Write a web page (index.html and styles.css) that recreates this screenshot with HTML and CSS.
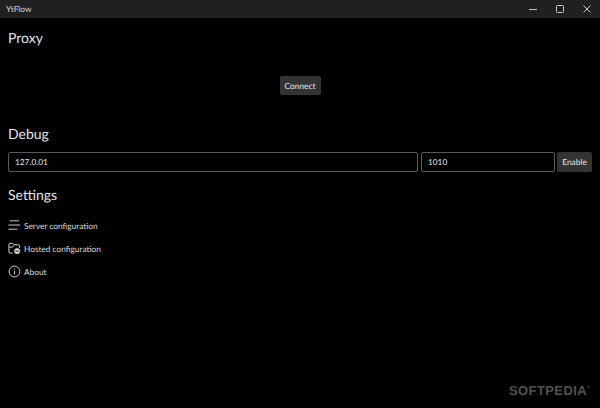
FILE: index.html
```html
<!DOCTYPE html>
<html lang="en">
<head>
<meta charset="utf-8">
<title>YtFlow</title>
<link rel="stylesheet" href="styles.css">
</head>
<body>
<div class="app">
  <header class="titlebar">
    <span class="app-name">YtFlow</span>
    <div class="caption">
      <svg class="cap-icon" viewBox="0 0 10 10"><path d="M1 5.5H9" /></svg>
      <svg class="cap-icon" viewBox="0 0 10 10"><rect x="1.5" y="1.5" width="7" height="7" rx="1" /></svg>
      <svg class="cap-icon" viewBox="0 0 10 10"><path d="M1.5 1.5L8.5 8.5M8.5 1.5L1.5 8.5" /></svg>
    </div>
  </header>
  <main class="content">
    <h2 class="heading">Proxy</h2>
    <div class="connect-row"><button class="btn">Connect</button></div>
    <h2 class="heading debug-heading">Debug</h2>
    <div class="debug-row">
      <div class="field field-host">127.0.01</div>
      <div class="field field-port">1010</div>
      <button class="btn btn-enable">Enable</button>
    </div>
    <h2 class="heading settings-heading">Settings</h2>
    <nav class="menu">
      <div class="menu-item">
        <svg class="menu-icon" viewBox="0 0 14 14"><path d="M2 2H12M0.5 6.5H13M0.5 11H10" /></svg>
        <span>Server configuration</span>
      </div>
      <div class="menu-item">
        <svg class="menu-icon" viewBox="0 0 14 14"><path d="M5 12H2a1 1 0 0 1-1-1V2.500a1 1 0 0 1 1-1h3l1.500 1.500H11.500a1 1 0 0 1 1 1v2.500" /><path d="M1 5.500H5l1.500-2" /><circle class="solid" cx="9.800" cy="9.800" r="3.700" /><path class="cut" d="M8 9.800h3.600" /></svg>
        <span>Hosted configuration</span>
      </div>
      <div class="menu-item">
        <svg class="menu-icon" viewBox="0 0 14 14"><circle cx="7" cy="7" r="5.800" /><path d="M7 6.300V10.200M7 3.800V5" /></svg>
        <span>About</span>
      </div>
    </nav>
  </main>
  <div class="watermark">SOFTPEDIA<sup class="reg">®</sup></div>
</div>
</body>
</html>
```
FILE: styles.css
```css
* { box-sizing: border-box; }
html, body { margin: 0; padding: 0; background: #000; }
body { width: 600px; height: 408px; overflow: hidden; font-family: "Lato", "Liberation Sans", sans-serif; color: #fff; text-rendering: geometricPrecision; }
.app { position: relative; width: 600px; height: 408px; background: #000; }
.titlebar { height: 18px; background: #202020; display: flex; align-items: center; justify-content: space-between; padding-left: 6px; }
.app-name { font-size: 8.3px; color: #d8d8d8; }
.caption { display: flex; height: 100%; align-items: center; gap: 17px; padding-right: 8px; }
.cap-icon { width: 10px; height: 10px; fill: none; stroke: #c8c8c8; stroke-width: 1; }
.content { padding: 0 8px; }
.heading { margin: 0; font-weight: 400; font-size: 14px; line-height: 20px; color: #e6e6e6; }
.content > .heading:first-child { margin-top: 10px; }
.connect-row { display: flex; justify-content: center; margin-top: 28px; }
.btn { height: 19px; padding: 0 4px; border: 0; border-radius: 2px; background: #333; color: #e4e4e4; font: 8.4px "Lato", "Liberation Sans", sans-serif; text-rendering: geometricPrecision; }
.connect-row .btn { width: 41px; }
.debug-heading { margin-top: 29px; }
.debug-row { display: flex; margin-top: 8px; }
.field { height: 20px; border: 1px solid #5a5a5a; border-radius: 2px; background: #000; padding-left: 6px; font-size: 8.3px; line-height: 18px; color: #e4e4e4; }
.field-host { width: 410px; margin-right: 3px; }
.field-port { width: 134px; margin-right: 2px; }
.btn-enable { width: 35px; height: 20px; }
.settings-heading { margin-top: 13px; }
.menu { margin-top: 9px; display: flex; flex-direction: column; }
.menu-item { height: 23px; display: flex; align-items: center; gap: 3px; font-size: 8.3px; color: #dcdcdc; }
.menu-icon { width: 13px; height: 13px; fill: none; stroke: #dcdcdc; stroke-width: 1; flex: none; }
.menu-icon .solid { fill: #dcdcdc; stroke: #000; }
.menu-icon .cut { stroke: #000; }
.watermark { position: absolute; left: 509px; top: 383px; font: 700 13px "Liberation Sans", sans-serif; letter-spacing: 0.4px; color: #505050; line-height: 15px; }
.reg { font-size: 4px; vertical-align: top; line-height: 8px; }
```
